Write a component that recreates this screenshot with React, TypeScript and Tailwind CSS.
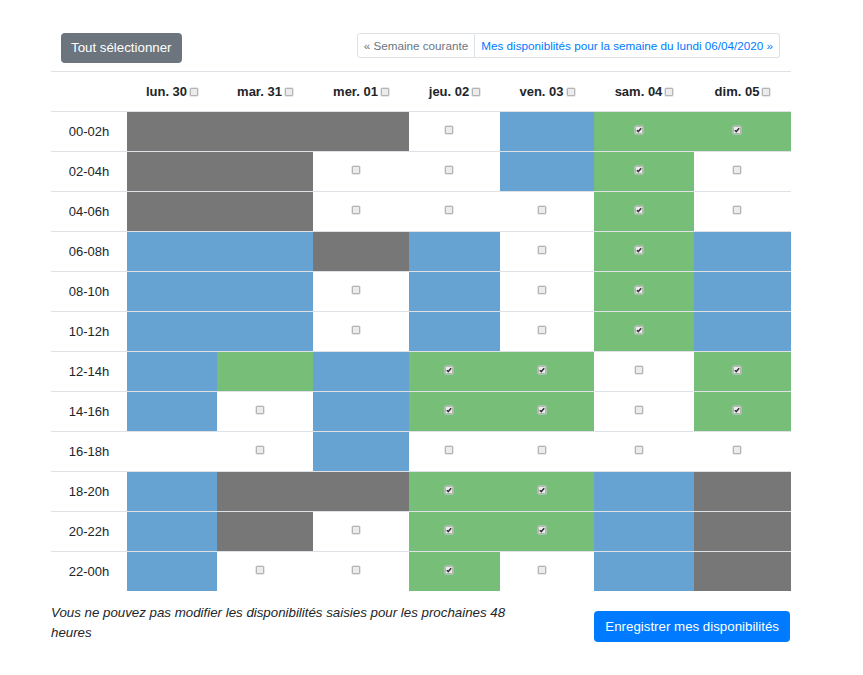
import React from "react";

type C = "G" | "B" | "V" | "W" | "E" | "g";

const days = ["lun. 30", "mar. 31", "mer. 01", "jeu. 02", "ven. 03", "sam. 04", "dim. 05"];
const rows: { label: string; cells: C[] }[] = [
  { label: "00-02h", cells: ["G", "G", "G", "W", "B", "V", "V"] },
  { label: "02-04h", cells: ["G", "G", "W", "W", "B", "V", "W"] },
  { label: "04-06h", cells: ["G", "G", "W", "W", "W", "V", "W"] },
  { label: "06-08h", cells: ["B", "B", "G", "B", "W", "V", "B"] },
  { label: "08-10h", cells: ["B", "B", "W", "B", "W", "V", "B"] },
  { label: "10-12h", cells: ["B", "B", "W", "B", "W", "V", "B"] },
  { label: "12-14h", cells: ["B", "g", "B", "V", "V", "W", "V"] },
  { label: "14-16h", cells: ["B", "W", "B", "V", "V", "W", "V"] },
  { label: "16-18h", cells: ["E", "W", "B", "W", "W", "W", "W"] },
  { label: "18-20h", cells: ["B", "G", "G", "V", "V", "B", "G"] },
  { label: "20-22h", cells: ["B", "G", "W", "V", "V", "B", "G"] },
  { label: "22-00h", cells: ["B", "W", "W", "V", "W", "B", "G"] },
];

function Box({ checked }: { checked?: boolean }) {
  return (
    <span className="inline-flex w-[8px] h-[8px] items-center justify-center rounded-[1px] border border-[#b4b4b4] bg-[#ececec] shadow-[0_0_0_0.5px_#d0d0d0]">
      {checked && (
        <svg width="6" height="6" viewBox="0 0 6 6">
          <path d="M0.8 3.2 L2.3 4.6 L5.2 1.2" stroke="#333" strokeWidth="1.5" fill="none" />
        </svg>
      )}
    </span>
  );
}

function Cell({ c }: { c: C }) {
  const bg =
    c === "G" ? "bg-[#777777]" : c === "B" ? "bg-[#66a2d2]" : c === "V" || c === "g" ? "bg-[#77be78]" : "bg-white";
  return (
    <div className={`h-[40px] border-t border-[#dee2e6] flex items-center justify-center pb-[3px] ${bg}`}>
      {(c === "W" || c === "V") && (
        <span className="mr-[11px] flex">
          <Box checked={c === "V"} />
        </span>
      )}
    </div>
  );
}

export default function App() {
  return (
    <div className="w-[863px] h-[675px] bg-white text-[#212529]" style={{ fontFamily: '"Liberation Sans", Arial, sans-serif' }}>
      <div className="ml-[51px] w-[740px] pt-[33px]">
        <div className="flex justify-between items-start px-[10px]">
          <button className="h-[30px] px-[10px] rounded-[4px] bg-[#6c757d] text-white text-[13.3px] leading-[30px]">
            Tout sélectionner
          </button>
          <div className="flex h-[25px] text-[11.7px] leading-[23px] mr-[1px]">
            <span className="border border-[#dee2e6] rounded-l-[3px] px-[6px] text-[#6c757d]">« Semaine courante</span>
            <span className="border border-l-0 border-[#dee2e6] rounded-r-[3px] px-[6px] text-[#007bff]">
              Mes disponiblités pour la semaine du lundi 06/04/2020 »
            </span>
          </div>
        </div>
        <div className="mt-[8px] grid grid-cols-[76px_90px_96px_96px_91px_94px_100px_97px]">
          <div className="h-[40px] border-t border-[#dee2e6]" />
          {days.map((d) => (
            <div key={d} className="h-[40px] border-t border-[#dee2e6] flex items-center justify-center gap-[3px] text-[13px] font-bold">
              <span>{d}</span>
              <Box />
            </div>
          ))}
          {rows.map((r) => (
            <React.Fragment key={r.label}>
              <div className="h-[40px] border-t border-[#dee2e6] flex items-center justify-center text-[13px]">{r.label}</div>
              {r.cells.map((c, i) => (
                <Cell key={i} c={c} />
              ))}
            </React.Fragment>
          ))}
        </div>
        <div className="flex justify-between items-start mt-[12px]">
          <p className="w-[470px] text-[13.3px] leading-[19.5px] italic">
            Vous ne pouvez pas modifier les disponibilités saisies pour les prochaines 48 heures
          </p>
          <button className="mt-[8px] h-[31px] px-[11px] rounded-[4px] bg-[#007bff] text-white text-[13.3px] leading-[31px] mr-[1px]">
            Enregistrer mes disponibilités
          </button>
        </div>
      </div>
    </div>
  );
}
